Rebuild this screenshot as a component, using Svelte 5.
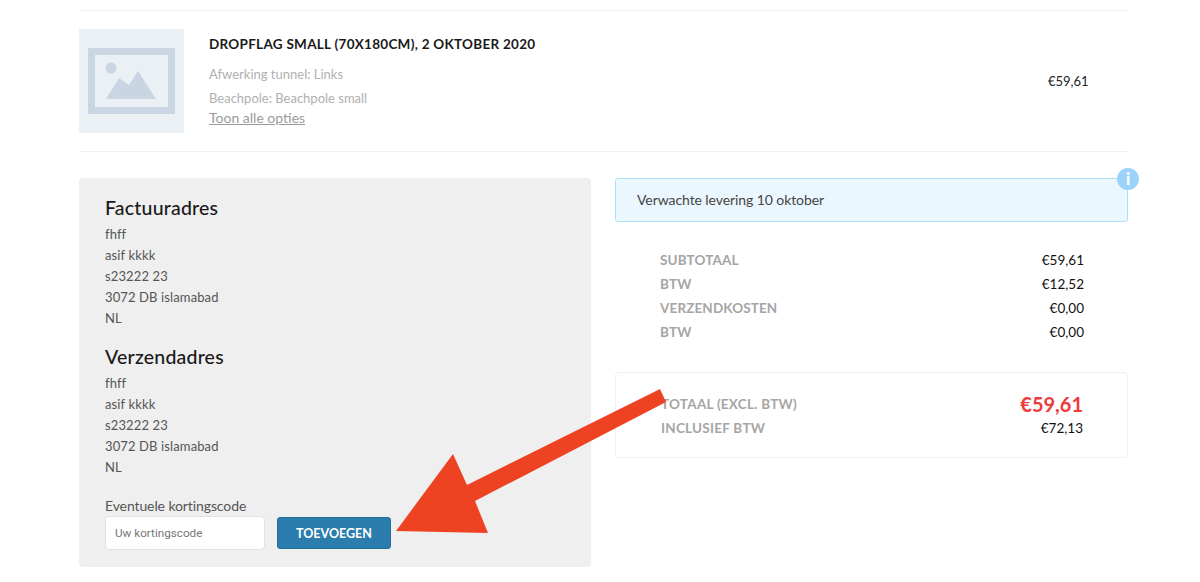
<script>
  const options = ['Afwerking tunnel: Links', 'Beachpole: Beachpole small']
  const address = ['fhff', 'asif kkkk', 's23222 23', '3072 DB islamabad', 'NL']
  const totals = [
    { label: 'SUBTOTAAL', value: '€59,61' },
    { label: 'BTW', value: '€12,52' },
    { label: 'VERZENDKOSTEN', value: '€0,00' },
    { label: 'BTW', value: '€0,00' },
  ]
</script>

<div class="page">
  <div class="product">
    <div class="thumb">
      <svg width="87" height="66" viewBox="0 0 87 66">
        <rect x="3.5" y="3.5" width="80" height="59" fill="none" stroke="#c9d5e2" stroke-width="7" />
        <circle cx="23" cy="20" r="5.5" fill="#c9d5e2" />
        <path d="M18 51 L31 30 L41 37 L50 23 L68 51 Z" fill="#c9d5e2" />
      </svg>
    </div>
    <div class="info">
      <h2>DROPFLAG SMALL (70X180CM), 2 OKTOBER 2020</h2>
      {#each options as option}
        <p class="option">{option}</p>
      {/each}
      <a href="#opties" class="show-all">Toon alle opties</a>
    </div>
    <div class="price">€59,61</div>
  </div>

  <div class="columns">
    <div class="panel">
      <h3>Factuuradres</h3>
      {#each address as line}
        <p class="addr">{line}</p>
      {/each}
      <h3 class="second">Verzendadres</h3>
      {#each address as line}
        <p class="addr">{line}</p>
      {/each}
      <label class="code-label" for="code">Eventuele kortingscode</label>
      <div class="code-row">
        <input id="code" placeholder="Uw kortingscode" />
        <button>TOEVOEGEN</button>
      </div>
    </div>

    <div class="summary">
      <div class="notice">
        Verwachte levering 10 oktober
        <span class="info-badge">i</span>
      </div>
      <div class="rows">
        {#each totals as row}
          <div class="row">
            <span class="label">{row.label}</span>
            <span class="value">{row.value}</span>
          </div>
        {/each}
      </div>
      <div class="total">
        <div class="row big">
          <span class="label">TOTAAL (EXCL. BTW)</span>
          <span class="grand">€59,61</span>
        </div>
        <div class="row">
          <span class="label">INCLUSIEF BTW</span>
          <span class="value">€72,13</span>
        </div>
      </div>
    </div>
  </div>

  <!-- annotation drawn over the screenshot -->
  <svg class="arrow" width="1200" height="582" viewBox="0 0 1200 582">
    <path d="M660 389 L666 402 L475 501 L488 533 L396 531 L453 454 L467 485 Z" fill="#ee4323" />
  </svg>
</div>

<style>
  :global(body) {
    margin: 0;
    background: #fff;
  }

  .page {
    position: relative;
    width: 1200px;
    height: 582px;
    overflow: hidden;
    box-sizing: border-box;
    padding: 10px 72px 0 79px;
    font-family: Lato, "Open Sans", sans-serif;
    color: #444;
  }

  .product {
    display: flex;
    align-items: center;
    height: 140px;
    border-top: 1px solid #f1f1f1;
    border-bottom: 1px solid #f1f1f1;
  }

  .thumb {
    width: 105px;
    height: 104px;
    background: #ebf0f5;
    display: flex;
    align-items: center;
    justify-content: center;
    flex-shrink: 0;
  }

  .info {
    flex: 1;
    margin-left: 25px;
    margin-top: -1px;
  }

  .info h2 {
    margin: 0 0 12px;
    font-size: 13.5px;
    line-height: 18px;
    font-weight: 700;
    letter-spacing: 0.28px;
    color: #1a1a1a;
  }

  .option {
    margin: 0 0 6px;
    font-size: 13px;
    line-height: 18px;
    color: #b0b0b0;
  }

  .show-all {
    display: block;
    margin-top: -4px;
    font-size: 14px;
    line-height: 18px;
    color: #9b9b9b;
    text-decoration: underline;
  }

  .price {
    width: 80px;
    font-size: 13px;
    color: #222;
  }

  .columns {
    display: flex;
    gap: 24px;
    margin-top: 26px;
  }

  .panel {
    width: 512px;
    height: 389px;
    box-sizing: border-box;
    padding: 18px 26px 0;
    background: #efefef;
    border-radius: 4px;
  }

  .panel h3 {
    margin: 0 0 4px;
    font-size: 19.5px;
    line-height: 24px;
    font-weight: 500;
    color: #1a1a1a;
    letter-spacing: 0.2px;
  }

  .panel h3.second {
    margin-top: 16px;
  }

  .addr {
    margin: 0;
    font-size: 13px;
    line-height: 21px;
    color: #555;
    letter-spacing: 0.12px;
  }

  .code-label {
    display: block;
    margin-top: 19px;
    font-size: 14px;
    line-height: 18px;
    color: #555;
    letter-spacing: -0.1px;
  }

  .code-row {
    display: flex;
    align-items: flex-start;
    gap: 12px;
    margin-top: 1px;
  }

  input {
    width: 158px;
    height: 32px;
    box-sizing: content-box;
    padding: 0;
    text-indent: 9px;
    border: 1px solid #e2e2e2;
    border-radius: 4px;
    background: #fff;
    font-family: Roboto, sans-serif;
    font-size: 11.7px;
  }

  input::placeholder {
    color: #777;
    opacity: 1;
  }

  button {
    width: 114px;
    height: 32px;
    margin-top: 1px;
    padding: 0;
    background: #2a7dac;
    border: 1px solid #246f9a;
    border-radius: 3px;
    color: #fff;
    font-family: inherit;
    font-size: 12.5px;
    font-weight: 700;
  }

  .summary {
    width: 513px;
  }

  .notice {
    position: relative;
    height: 42px;
    line-height: 42px;
    padding-left: 21px;
    background: #ebf7fe;
    border: 1px solid #aee0f5;
    border-radius: 3px;
    font-size: 14px;
    color: #444;
    letter-spacing: -0.08px;
  }

  .info-badge {
    position: absolute;
    top: -11px;
    right: -12px;
    width: 22px;
    height: 22px;
    border-radius: 50%;
    background: #9bd3fb;
    color: #fff;
    font-size: 16px;
    font-weight: 900;
    line-height: 22px;
    text-align: center;
  }

  .rows {
    margin-top: 26px;
    padding: 0 44px 0 45px;
  }

  .row {
    display: flex;
    justify-content: space-between;
    align-items: center;
    height: 24px;
  }

  .label {
    font-size: 13.5px;
    font-weight: 700;
    color: #a5a5a5;
    letter-spacing: 0.12px;
  }

  .value {
    font-size: 13.5px;
    color: #111;
  }

  .total {
    margin-top: 28px;
    height: 86px;
    box-sizing: border-box;
    padding: 18px 44px 0 45px;
    border: 1px solid #f0f0f0;
    border-radius: 4px;
  }

  .row.big {
    height: 25px;
  }

  .total .label {
    letter-spacing: 0.25px;
  }

  .grand {
    font-size: 20px;
    font-weight: 700;
    color: #ee3a3a;
  }

  .arrow {
    position: absolute;
    top: 0;
    left: 0;
    pointer-events: none;
  }
</style>
